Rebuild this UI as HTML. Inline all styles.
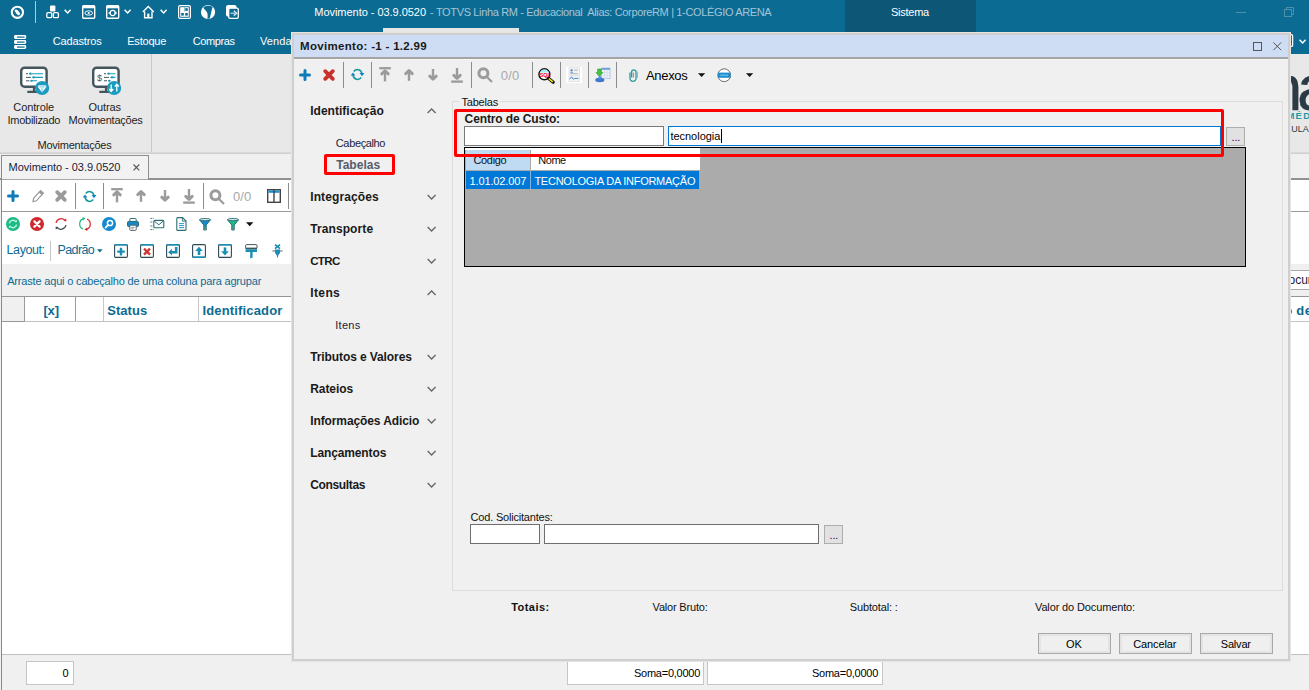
<!DOCTYPE html>
<html lang="pt-BR">
<head>
<meta charset="utf-8">
<title>Movimento - 03.9.0520 - TOTVS Linha RM</title>
<style>
*{box-sizing:border-box;margin:0;padding:0}
html,body{width:1309px;height:690px;overflow:hidden;background:#f0f0f0}
body{position:relative;font-family:"Liberation Sans",sans-serif;font-size:11px;color:#000;line-height:1}
.a{position:absolute}
.t{position:absolute;white-space:pre}
svg{position:absolute;overflow:visible}
#top{left:0;top:0;width:1309px;height:54px;background:#0c6b93}
#rib{left:0;top:54px;width:1309px;height:99px;background:#e8e8e8}
#main{left:0;top:153px;width:1309px;height:537px;background:#f0f0f0}
#dlg{left:291px;top:32px;width:1000px;height:629px;background:#f0f0f0}
.btn{position:absolute;border:1px solid #adadad;background:#e1e1e1}
.btn2{position:absolute;border:1px solid #a8a8a8;background:#efefef;box-shadow:inset 0 0 0 2px #e4e4e4}
.inp{position:absolute;background:#fff;border:1px solid #7a7a7a}
.sep{position:absolute;width:1px;background:#a0a0a0}
</style>
</head>
<body>
<div id="top" class="a">
<div class="a" style="left:845px;top:0;width:131px;height:33px;background:#0d5675"></div>
<div class="a" style="left:383px;top:28px;width:136px;height:5px;background:#e6e6e6"></div>
<svg style="left:10px;top:5px" width="15" height="15" viewBox="0 0 15 15"><circle cx="7.4" cy="7.3" r="5.6" fill="none" stroke="#fff" stroke-width="2.1"/><path d="M4.4 5.6 L5.8 4.2 L8 5.4 L10.4 8.8 L9 10.4 L6.8 9.2 Z" fill="#fff"/></svg>
<div class="a" style="left:35px;top:1px;width:1px;height:22px;background:#c9c3bb"></div>
<svg style="left:46px;top:5px" width="14" height="14" viewBox="0 0 14 14"><rect x="4" y="0.5" width="5.4" height="6" rx="1" fill="#fff"/><rect x="0.8" y="7.6" width="5" height="5" rx="1.2" fill="none" stroke="#fff" stroke-width="1.3"/><rect x="7.4" y="7.6" width="5" height="5" rx="1.2" fill="none" stroke="#fff" stroke-width="1.3"/></svg>
<svg style="left:82px;top:5px" width="14" height="14" viewBox="0 0 14 14"><rect x="0.7" y="0.7" width="12" height="12.6" rx="1" fill="none" stroke="#fff" stroke-width="1.4"/><rect x="0.7" y="0.7" width="12" height="2.6" fill="#fff"/><ellipse cx="6.7" cy="8" rx="3.8" ry="2.2" fill="none" stroke="#fff" stroke-width="1"/><circle cx="6.7" cy="8" r="1.1" fill="#fff"/></svg>
<svg style="left:106px;top:5px" width="14" height="14" viewBox="0 0 14 14"><rect x="0.7" y="0.7" width="12" height="12.6" rx="1" fill="none" stroke="#fff" stroke-width="1.4"/><rect x="0.7" y="0.7" width="12" height="2.6" fill="#fff"/><circle cx="6.7" cy="8" r="2.6" fill="none" stroke="#fff" stroke-width="1.1"/><path d="M2.6 8 h2.4 M8.4 8 h2.4" stroke="#fff" stroke-width="1.6"/></svg>
<svg style="left:142px;top:5px" width="14" height="14" viewBox="0 0 14 14"><path d="M0.8 7 L6.3 1.5 L11.8 7" fill="none" stroke="#fff" stroke-width="1.4"/><path d="M2.6 6.4 V12.8 H10 V6.4" fill="none" stroke="#fff" stroke-width="1.4"/><rect x="5.2" y="8.6" width="2.2" height="4" fill="#fff"/></svg>
<svg style="left:178px;top:5px" width="14" height="14" viewBox="0 0 14 14"><rect x="0.6" y="0.6" width="11.8" height="12.8" rx="1.4" fill="none" stroke="#fff" stroke-width="1.2"/><rect x="2.2" y="2.2" width="8.6" height="9.6" fill="#fff"/><rect x="7.2" y="3.2" width="2.6" height="2.6" fill="#0c6b93"/><rect x="3.2" y="8" width="2.6" height="2.6" fill="#0c6b93"/><rect x="7.2" y="8" width="2.6" height="2.6" fill="#0c6b93"/><rect x="6" y="2.2" width="0.8" height="4.4" fill="#7fb2c8"/></svg>
<svg style="left:200px;top:4px" width="16" height="16" viewBox="0 0 16 16"><circle cx="8.05" cy="8" r="7.1" fill="#fff"/><path d="M3.2 3.8 C4.4 2.4 6.4 1.8 8.2 1.8 C10 1.8 11.6 2.2 12.6 3 C12 5 11.4 7.6 10.8 10.2 C10.4 12 10 13.6 9.6 14.6 L7.4 14.8 C7.8 12 7.8 9.6 6.8 8 C5.8 6.4 4.2 5.6 3.2 3.6 Z" fill="#0c6b93"/></svg>
<svg style="left:226px;top:5px" width="14" height="14" viewBox="0 0 14 14"><rect x="0" y="0" width="10.6" height="11.6" rx="2.2" fill="#fff"/><rect x="2.7" y="3.2" width="9.6" height="10.2" rx="1.4" fill="#0c6b93" stroke="#fff" stroke-width="1.3"/><path d="M4.6 8.3 H9.6" stroke="#9fc8da" stroke-width="1.5"/><path d="M7.8 5.8 L10.6 8.3 L7.8 10.8" fill="none" stroke="#d4e7f0" stroke-width="1.4"/></svg>
<svg style="left:64px;top:9px" width="8" height="6" viewBox="0 0 8 6"><path d="M0.6 0.8 L3.6 3.9 L6.6 0.8" fill="none" stroke="#fff" stroke-width="1.5"/></svg>
<svg style="left:124px;top:9px" width="8" height="6" viewBox="0 0 8 6"><path d="M0.6 0.8 L3.6 3.9 L6.6 0.8" fill="none" stroke="#fff" stroke-width="1.5"/></svg>
<svg style="left:159.5px;top:9px" width="8" height="6" viewBox="0 0 8 6"><path d="M0.6 0.8 L3.6 3.9 L6.6 0.8" fill="none" stroke="#fff" stroke-width="1.5"/></svg>
<div class="t" style="left:314.3px;top:5.0px;font-size:11px;line-height:14px;height:14px;color:#fff;letter-spacing:-0.039px;">Movimento - 03.9.0520</div>
<div class="t" style="left:427.4px;top:5.0px;font-size:11px;line-height:14px;height:14px;color:#a3c6d8;letter-spacing:-0.350px;"> - TOTVS Linha RM - Educacional  Alias: CorporeRM | 1-COLÉGIO ARENA</div>
<div class="t" style="left:891px;top:5.0px;font-size:11px;line-height:14px;height:14px;color:#fff;letter-spacing:-0.250px;">Sistema</div>
<div class="a" style="left:1236px;top:12px;width:10px;height:1px;background:#4f90ad"></div>
<svg style="left:1284px;top:7px" width="11" height="11" viewBox="0 0 11 11"><rect x="0.5" y="2.5" width="7" height="7" fill="none" stroke="#4f90ad"/><path d="M2.5 2.5 V0.5 H9.5 V7.5 H7.5" fill="none" stroke="#4f90ad"/></svg>
<svg style="left:14px;top:35px" width="13" height="14" viewBox="0 0 13 14"><g fill="#fff"><rect x="0" y="0" width="12.2" height="4" rx="1.4"/><rect x="0" y="5" width="12.2" height="4" rx="1.4"/><rect x="0" y="10" width="12.2" height="4" rx="1.4"/></g><g fill="#0c6b93"><rect x="3" y="1.5" width="7.6" height="1.2"/><rect x="3" y="6.5" width="7.6" height="1.2"/><rect x="3" y="11.5" width="7.6" height="1.2"/></g></svg>
<div class="t" style="left:52.7px;top:34.0px;font-size:11px;line-height:14px;height:14px;color:#fff;letter-spacing:-0.149px;">Cadastros</div>
<div class="t" style="left:127.2px;top:34.0px;font-size:11px;line-height:14px;height:14px;color:#fff;letter-spacing:-0.196px;">Estoque</div>
<div class="t" style="left:192.8px;top:34.0px;font-size:11px;line-height:14px;height:14px;color:#fff;letter-spacing:-0.404px;">Compras</div>
<div class="t" style="left:260px;top:34.0px;font-size:11px;line-height:14px;height:14px;color:#fff;letter-spacing:0.116px;">Vendas</div>
<svg style="left:1289px;top:34px" width="6" height="14" viewBox="0 0 6 14"><path d="M0 0.6 H2.4 Q3.6 0.6 3.6 1.8 V11.2 Q3.6 12.4 2.4 12.4 H0" fill="none" stroke="#fff" stroke-width="1.3"/></svg>
<svg style="left:1298.5px;top:39px" width="8" height="6" viewBox="0 0 8 6"><path d="M0.6 0.8 L3.6 3.9 L6.6 0.8" fill="none" stroke="#fff" stroke-width="1.5"/></svg>
</div>
<div id="rib" class="a">
<div class="a" style="left:151px;top:0;width:1px;height:99px;background:#c8c8c8"></div>
<div class="a" style="left:0;top:98px;width:1309px;height:1px;background:#dadada"></div>
<svg style="left:20px;top:12px" width="30" height="30" viewBox="0 0 30 30"><rect x="1.2" y="1.7" width="25.4" height="19" rx="3.4" fill="#fff" stroke="#44555c" stroke-width="2.4"/><path d="M14 21.6 V25.6 M8.2 25.9 H19" stroke="#44555c" stroke-width="2.2" stroke-linecap="round" fill="none"/><path d="M6 7.7 H8 M6 11.4 H11 M6 14.8 H9.4" stroke="#44555c" stroke-width="1"/><path d="M9 7.7 H23 M12.4 11.4 H23 M10.4 14.8 H17" stroke="#1a9bc0" stroke-width="1.1"/><circle cx="10.4" cy="7.7" r="1.1" fill="#1a9bc0"/><circle cx="13.6" cy="11.4" r="1.1" fill="#1a9bc0"/><circle cx="11.6" cy="14.8" r="1.1" fill="#1a9bc0"/><circle cx="22.1" cy="22" r="7.1" fill="#1a9bc0"/><path d="M18.8 19.2 H25.4 L26.6 20.7 L22.1 26.6 L17.6 20.7 Z" fill="#fff"/><path d="M17.8 20.9 H26.4 M20.8 19.4 L22.1 26 L23.4 19.4" stroke="#1a9bc0" stroke-width="0.5" fill="none" opacity="0.7"/></svg>
<svg style="left:92px;top:12px" width="30" height="30" viewBox="0 0 30 30"><rect x="1.2" y="1.7" width="25.4" height="19" rx="3.4" fill="#fff" stroke="#44555c" stroke-width="2.4"/><path d="M14 21.6 V25.6 M8.2 25.9 H19" stroke="#44555c" stroke-width="2.2" stroke-linecap="round" fill="none"/><text x="5" y="15" font-family="Liberation Sans,sans-serif" font-size="9" fill="#44555c">$</text><path d="M12 7.7 H14 M12 11.4 H17 M12 14.8 H15" stroke="#44555c" stroke-width="1"/><path d="M15.4 7.7 H23.4 M18.4 11.4 H23.4 M16 14.8 H18.4" stroke="#1a9bc0" stroke-width="1.1"/><circle cx="16.6" cy="7.7" r="1.1" fill="#1a9bc0"/><circle cx="20" cy="11.4" r="1.1" fill="#1a9bc0"/><circle cx="17.4" cy="14.8" r="1.1" fill="#1a9bc0"/><circle cx="22.1" cy="22" r="7.1" fill="#1a9bc0"/><path d="M19.2 18.4 V25.2 M17.2 23 L19.2 25.4 L21.2 23 M24.8 25.4 V18.4 M22.8 20.6 L24.8 18.2 L26.8 20.6" stroke="#fff" stroke-width="1.3" fill="none"/></svg>
<div class="t" style="left:13.3px;top:46.0px;font-size:11px;line-height:14px;height:14px;color:#1e1e1e;letter-spacing:-0.110px;">Controle</div>
<div class="t" style="left:7.6px;top:59.4px;font-size:11px;line-height:14px;height:14px;color:#1e1e1e;letter-spacing:-0.286px;">Imobilizado</div>
<div class="t" style="left:88.6px;top:46.0px;font-size:11px;line-height:14px;height:14px;color:#1e1e1e;letter-spacing:-0.103px;">Outras</div>
<div class="t" style="left:68.6px;top:59.4px;font-size:11px;line-height:14px;height:14px;color:#1e1e1e;letter-spacing:-0.234px;">Movimentações</div>
<div class="t" style="left:37.5px;top:84.0px;font-size:11px;line-height:14px;height:14px;color:#1e1e1e;letter-spacing:-0.234px;">Movimentações</div>
<div class="a" style="left:1291px;top:10px;width:18px;height:60px;overflow:hidden"><div class="t" style="left:-24.2px;top:-8px;font-size:64px;line-height:64px;height:64px;font-weight:400;color:#2b3b45;letter-spacing:-5.5px;-webkit-text-stroke:0.25px #2b3b45">na</div></div>
<div class="t" style="left:1286.4px;top:55.8px;font-size:9.5px;line-height:12.5px;height:12.5px;font-weight:700;color:#1a9ba3;letter-spacing:1.3px;">MÉD</div>
<div class="t" style="left:1291.2px;top:69.4px;font-size:9px;line-height:12px;height:12px;color:#2b3b45;">ULAR</div>
</div>
<div id="main" class="a"></div>
<div class="a" style="left:0;top:153px;width:1309px;height:1px;background:#cfcfcf"></div>
<div class="a" style="left:0;top:178px;width:1309px;height:2px;background:#919191"></div>
<div class="a" style="left:1px;top:155px;width:148px;height:25px;background:#f2f2f2;border:1px solid #8f8f8f;border-bottom:0"></div>
<div class="a" style="left:2px;top:179px;width:146px;height:1px;background:#a6a6a6"></div>
<div class="t" style="left:8.6px;top:160.0px;font-size:11px;line-height:14px;height:14px;color:#1c1c38;letter-spacing:-0.034px;">Movimento - 03.9.0520</div>
<svg style="left:133px;top:164px" width="7" height="7" viewBox="0 0 7 7"><path d="M0.5 0.5 L6.3 6.3 M6.3 0.5 L0.5 6.3" stroke="#555" stroke-width="1.1"/></svg>
<div class="a" style="left:2px;top:180px;width:1307px;height:474px;background:#fff"></div>
<div class="a" style="left:1px;top:156px;width:1px;height:534px;background:#8a8a8a"></div>
<div class="a" style="left:2px;top:211px;width:1307px;height:1px;background:#9a9a9a"></div>
<div class="a" style="left:2px;top:264px;width:1307px;height:33px;background:#f0f0f0"></div>
<div class="a" style="left:2px;top:296px;width:1307px;height:1px;background:#959595"></div>
<div class="a" style="left:2px;top:321px;width:1307px;height:1px;background:#c2c2c2"></div>
<div class="a" style="left:2px;top:297px;width:22px;height:24px;background:#f0f0f0"></div>
<div class="a" style="left:24px;top:297px;width:1px;height:24px;background:#9a9a9a"></div>
<div class="a" style="left:75px;top:297px;width:1px;height:24px;background:#9a9a9a"></div>
<div class="a" style="left:103px;top:297px;width:1px;height:24px;background:#c6c6c6"></div>
<div class="a" style="left:198px;top:297px;width:1px;height:24px;background:#c6c6c6"></div>
<div class="a" style="left:2px;top:321px;width:23px;height:1px;background:#999"></div>
<div class="a" style="left:2px;top:654px;width:1307px;height:1px;background:#c0c0c0"></div>
<svg style="left:7.2px;top:190.2px" width="12" height="12" viewBox="0 0 12 12"><path d="M6 1.5 V10.5 M1.5 6 H10.5" stroke="#0c7bb6" stroke-width="3" stroke-linecap="round"/></svg>
<svg style="left:32px;top:189px" width="13" height="14" viewBox="0 0 13 14"><path d="M1 12.6 L1.6 9.4 L8.6 1.6 L11.4 4 L4.4 11.8 Z" fill="none" stroke="#9b9b9b" stroke-width="1.2"/><path d="M8.6 1.6 L11.4 4 L9.6 6 L6.8 3.6 Z" fill="#9b9b9b"/></svg>
<svg style="left:55px;top:190.2px" width="12" height="12" viewBox="0 0 12 12"><path d="M2.2 2.2 L9.8 9.8 M9.8 2.2 L2.2 9.8" stroke="#9b9b9b" stroke-width="3.8" stroke-linecap="round"/></svg>
<div class="a" style="left:75px;top:183px;width:1px;height:26px;background:#8c8c8c"></div>
<svg style="left:81.7px;top:190px" width="15" height="13" viewBox="0 0 15 13"><path d="M3.8 3.4 C6 0.6 11.2 0.8 12 5.8" fill="none" stroke="#16979d" stroke-width="1.6"/><path d="M11.2 9.6 C9 12.4 3.8 12.2 3 7.2" fill="none" stroke="#16979d" stroke-width="1.6"/><path d="M9.6 5 L14.4 5 L12 8.2 Z" fill="#0b86c6"/><path d="M0.6 7.6 L5.4 7.6 L3 4.4 Z" fill="#0b86c6"/></svg>
<div class="a" style="left:103px;top:183px;width:1px;height:26px;background:#8c8c8c"></div>
<svg style="left:111px;top:188px" width="12" height="15" viewBox="0 0 12 15"><path d="M0.2 1.2 H11.8" stroke="#9b9b9b" stroke-width="2.3"/><path d="M6 14.4 V5" stroke="#9b9b9b" stroke-width="2.4"/><path d="M2.8 6.9 L6 3.9 L9.2 6.9" fill="none" stroke="#9b9b9b" stroke-width="3" stroke-linecap="round" stroke-linejoin="round"/></svg>
<svg style="left:136.4px;top:190px" width="10" height="12" viewBox="0 0 10 12"><path d="M5 11.8 V2" stroke="#9b9b9b" stroke-width="2.4"/><path d="M1.8 4.6 L5 1.6 L8.2 4.6" fill="none" stroke="#9b9b9b" stroke-width="3" stroke-linecap="round" stroke-linejoin="round"/></svg>
<svg style="left:159.6px;top:190.4px" width="10" height="12" viewBox="0 0 10 12"><path d="M5 0 V9.8" stroke="#9b9b9b" stroke-width="2.4"/><path d="M1.8 7.2 L5 10.2 L8.2 7.2" fill="none" stroke="#9b9b9b" stroke-width="3" stroke-linecap="round" stroke-linejoin="round"/></svg>
<svg style="left:183px;top:188.8px" width="12" height="15" viewBox="0 0 12 15"><path d="M0.2 13.6 H11.8" stroke="#9b9b9b" stroke-width="2.3"/><path d="M6 0 V9.4" stroke="#9b9b9b" stroke-width="2.4"/><path d="M2.8 7.3 L6 10.3 L9.2 7.3" fill="none" stroke="#9b9b9b" stroke-width="3" stroke-linecap="round" stroke-linejoin="round"/></svg>
<div class="a" style="left:203px;top:183px;width:1px;height:26px;background:#8c8c8c"></div>
<svg style="left:209px;top:188.5px" width="16" height="16" viewBox="0 0 16 16"><circle cx="6.4" cy="6.2" r="4.5" fill="none" stroke="#9b9b9b" stroke-width="3"/><path d="M10 10 L15 15" stroke="#9b9b9b" stroke-width="2.2"/></svg>
<div class="t" style="left:233px;top:189.0px;font-size:13px;line-height:16px;height:16px;color:#a8a8a8;letter-spacing:0.141px;">0/0</div>
<svg style="left:267px;top:189px" width="14" height="14" viewBox="0 0 14 14"><rect x="0.7" y="0.7" width="12.6" height="12.6" fill="#fff" stroke="#444" stroke-width="1.4"/><rect x="1.4" y="1.4" width="11.2" height="2.4" fill="#1b8fd0"/><path d="M7 1 V13" stroke="#444" stroke-width="1.4"/></svg>
<div class="a" style="left:288px;top:183px;width:1px;height:26px;background:#8c8c8c"></div>
<svg style="left:6px;top:217px" width="14" height="14" viewBox="0 0 14 14"><circle cx="7" cy="7" r="7" fill="#1dbb84"/><path d="M3.4 6.4 A3.7 3.7 0 0 1 10 4.8 M10.6 7.6 A3.7 3.7 0 0 1 4 9.2" fill="none" stroke="#c9f3e2" stroke-width="1.4"/><path d="M8.6 5.2 L11 5 L10.8 2.8 Z M5.4 8.8 L3 9 L3.2 11.2 Z" fill="#c9f3e2"/></svg>
<svg style="left:30px;top:217px" width="14" height="14" viewBox="0 0 14 14"><circle cx="7" cy="7" r="7" fill="#d0282d"/><path d="M4.4 4.4 L9.6 9.6 M9.6 4.4 L4.4 9.6" stroke="#fff" stroke-width="2.2" stroke-linecap="round"/></svg>
<svg style="left:54px;top:217px" width="14" height="14" viewBox="0 0 14 14"><path d="M2 6 A5.2 5.2 0 0 1 11.4 4" fill="none" stroke="#d0282d" stroke-width="1.2"/><path d="M12 8 A5.2 5.2 0 0 1 2.6 10" fill="none" stroke="#3c4a4f" stroke-width="1.2"/><path d="M9.4 3.6 L12.4 4.6 L12.2 1.6 Z" fill="#d0282d"/><path d="M4.6 10.4 L1.6 9.4 L1.8 12.4 Z" fill="#3c4a4f"/></svg>
<svg style="left:78px;top:217px" width="14" height="14" viewBox="0 0 14 14"><path d="M5.4 1.6 A5.6 5.6 0 0 0 5 12" fill="none" stroke="#1dbb84" stroke-width="1.2"/><path d="M8.6 12.4 A5.6 5.6 0 0 0 9 2" fill="none" stroke="#d0282d" stroke-width="1.2"/><path d="M4.6 0 L7.6 1.6 L4.8 3.4 Z" fill="#1dbb84"/><path d="M9.4 14 L6.4 12.4 L9.2 10.6 Z" fill="#d0282d"/></svg>
<svg style="left:102px;top:217px" width="14" height="14" viewBox="0 0 14 14"><circle cx="7" cy="7" r="7" fill="#1389d1"/><circle cx="8" cy="6" r="2.6" fill="none" stroke="#fff" stroke-width="1.5"/><path d="M6.2 7.8 L3.6 10.6" stroke="#fff" stroke-width="1.8" stroke-linecap="round"/></svg>
<svg style="left:127px;top:218px" width="13" height="13" viewBox="0 0 13 13"><rect x="2.8" y="0.5" width="6.4" height="3.4" rx="0.8" fill="#fff" stroke="#2c6f73" stroke-width="1"/><rect x="0.5" y="3.4" width="11" height="5.2" rx="1.2" fill="#1785c6" stroke="#2c6f73" stroke-width="1"/><rect x="2.8" y="7.2" width="6.4" height="5.2" rx="0.8" fill="#fff" stroke="#55666c" stroke-width="1"/><path d="M4.4 9.4 H7.6 M4.4 10.8 H6.4" stroke="#55666c" stroke-width="0.7"/></svg>
<svg style="left:150px;top:217px" width="15" height="14" viewBox="0 0 15 14"><path d="M0.4 1.4 H4 M0.4 5 H2.6 M0.4 9 H2.6 M0.4 12.6 H4" stroke="#2c6f73" stroke-width="0.9" stroke-dasharray="2 1"/><rect x="3.8" y="3.4" width="10" height="7.4" rx="1" fill="#fff" stroke="#2c6f73" stroke-width="1.1"/><path d="M4.2 4 L8.8 7.8 L13.4 4" fill="none" stroke="#2c6f73" stroke-width="1"/></svg>
<svg style="left:176px;top:217px" width="11" height="14" viewBox="0 0 11 14"><path d="M0.8 1.6 Q0.8 0.6 1.8 0.6 H6.6 L10 4 V12.4 Q10 13.4 9 13.4 H1.8 Q0.8 13.4 0.8 12.4 Z" fill="#fff" stroke="#2c6f73" stroke-width="1.1"/><path d="M6.4 0.8 V4.2 H9.8" fill="none" stroke="#2c6f73" stroke-width="0.9"/><path d="M3 6.6 H8 M3 8.6 H8 M3 10.6 H8" stroke="#1389d1" stroke-width="0.9"/></svg>
<svg style="left:199px;top:218px" width="12" height="13" viewBox="0 0 12 13"><path d="M0.5 1.8 H11.5 L7.2 7 V12 H4.8 V7 Z" fill="#1389d1" stroke="#2c6f73" stroke-width="1"/><path d="M4.8 9 H7.2 V12 H4.8 Z" fill="#4f8f86"/><ellipse cx="6" cy="1.6" rx="5.4" ry="1.1" fill="#dfeef2" stroke="#2c6f73" stroke-width="0.9"/></svg>
<svg style="left:227px;top:218px" width="12" height="13" viewBox="0 0 12 13"><path d="M0.5 1.8 H11.5 L7.2 7 V12 H4.8 V7 Z" fill="#1dbb84" stroke="#2c6f73" stroke-width="1"/><path d="M4.8 9 H7.2 V12 H4.8 Z" fill="#4f8f86"/><ellipse cx="6" cy="1.6" rx="5.4" ry="1.1" fill="#dfeef2" stroke="#2c6f73" stroke-width="0.9"/></svg>
<svg style="left:246px;top:222px" width="8" height="5" viewBox="0 0 8 5"><path d="M0 0.3 H7.4 L3.7 4.2 Z" fill="#111"/></svg>
<div class="t" style="left:6.6px;top:243.4px;font-size:12.5px;line-height:15.5px;height:15.5px;color:#0c6b93;letter-spacing:-0.431px;">Layout:</div>
<div class="a" style="left:50px;top:241px;width:1px;height:20px;background:#c4c4c4"></div>
<div class="t" style="left:57.6px;top:243.4px;font-size:12.5px;line-height:15.5px;height:15.5px;color:#0c6b93;letter-spacing:-0.652px;">Padrão</div>
<svg style="left:97px;top:249px" width="6" height="4" viewBox="0 0 6 4"><path d="M0 0.2 H5.6 L2.8 3.4 Z" fill="#0c6b93"/></svg>
<svg style="left:114px;top:244px" width="14" height="14" viewBox="0 0 14 14"><rect x="0.6" y="0.6" width="12.8" height="12.8" rx="1.2" fill="#fff" stroke="#2f4a52" stroke-width="1.1"/><rect x="0.6" y="0" width="12.8" height="1.6" fill="#1a8fb4"/><path d="M7 3.8 V11.4 M3.2 7.6 H10.8" stroke="#1a8fb4" stroke-width="2.4"/></svg>
<svg style="left:140px;top:244px" width="14" height="14" viewBox="0 0 14 14"><rect x="0.6" y="0.6" width="12.8" height="12.8" rx="1.2" fill="#fff" stroke="#2f4a52" stroke-width="1.1"/><rect x="0.6" y="0" width="12.8" height="1.6" fill="#1a8fb4"/><path d="M4 4.6 L10 10.6 M10 4.6 L4 10.6" stroke="#cf3a35" stroke-width="2.4"/></svg>
<svg style="left:166px;top:244px" width="14" height="14" viewBox="0 0 14 14"><rect x="0.6" y="0.6" width="12.8" height="12.8" rx="1.2" fill="#fff" stroke="#2f4a52" stroke-width="1.1"/><rect x="0.6" y="0" width="12.8" height="1.6" fill="#1a8fb4"/><path d="M10.2 3 V8.2 H5" fill="none" stroke="#1a8fb4" stroke-width="2.6"/><path d="M6 4.8 L2.2 8.2 L6 11.6 Z" fill="#1a8fb4"/></svg>
<svg style="left:192px;top:244px" width="14" height="14" viewBox="0 0 14 14"><rect x="0.6" y="0.6" width="12.8" height="12.8" rx="1.2" fill="#fff" stroke="#2f4a52" stroke-width="1.1"/><rect x="0.6" y="12.4" width="12.8" height="1.6" fill="#1a8fb4"/><path d="M7 11 V5.4" stroke="#1a8fb4" stroke-width="2.6"/><path d="M3.2 7 L7 2.8 L10.8 7 Z" fill="#1a8fb4"/></svg>
<svg style="left:218px;top:244px" width="14" height="14" viewBox="0 0 14 14"><rect x="0.6" y="0.6" width="12.8" height="12.8" rx="1.2" fill="#fff" stroke="#2f4a52" stroke-width="1.1"/><rect x="0.6" y="0" width="12.8" height="1.6" fill="#1a8fb4"/><path d="M7 3.4 V8.6" stroke="#1a8fb4" stroke-width="2.6"/><path d="M3.2 7.2 L7 11.4 L10.8 7.2 Z" fill="#1a8fb4"/></svg>
<svg style="left:245px;top:244px" width="13" height="15" viewBox="0 0 13 15"><rect x="0.6" y="0.6" width="11.4" height="4" rx="1" fill="#fff" stroke="#46565e" stroke-width="1"/><rect x="0.6" y="3.6" width="11.4" height="1.6" fill="#46565e"/><path d="M0.6 5.2 H12 V8 H7.6 V13.6 L5.2 14.4 V8 H0.6 Z" fill="#1a8fb4"/></svg>
<svg style="left:272px;top:244px" width="11" height="15" viewBox="0 0 11 15"><path d="M3 0.6 L8 4.6 M8 0.6 L3 4.6" stroke="#1a8fb4" stroke-width="1.8"/><path d="M0.4 7 H10.6" stroke="#46565e" stroke-width="0.9"/><path d="M3 5.6 H8 V9 L6.4 11 L5.6 14.4 L4.6 11 L3 9 Z" fill="#1a8fb4"/></svg>
<div class="t" style="left:7.2px;top:274.0px;font-size:11px;line-height:14px;height:14px;color:#0c6b93;letter-spacing:-0.176px;">Arraste aqui o cabeçalho de uma coluna para agrupar</div>
<div class="t" style="left:43.4px;top:302.5px;font-size:13px;line-height:16px;height:16px;font-weight:700;color:#0c6b93;letter-spacing:-0.130px;">[x]</div>
<div class="t" style="left:107.2px;top:302.5px;font-size:13px;line-height:16px;height:16px;font-weight:700;color:#0c6b93;letter-spacing:0.044px;">Status</div>
<div class="t" style="left:202.5px;top:302.5px;font-size:13px;line-height:16px;height:16px;font-weight:700;color:#0c6b93;letter-spacing:0.153px;">Identificador</div>
<div class="inp" style="left:1286px;top:270px;width:30px;height:20px;border-color:#ababab"></div>
<div class="t" style="left:1279.8px;top:272.9px;font-size:12px;line-height:15px;height:15px;color:#1c1c38;">Docum</div>
<div class="t" style="left:1284.2px;top:302.5px;font-size:13px;line-height:16px;height:16px;font-weight:700;color:#0c6b93;letter-spacing:0.316px;">o de</div>
<div class="inp" style="left:26px;top:661px;width:48px;height:24px;border-color:#c6c6c6"></div>
<div class="t" style="left:62.5px;top:666.0px;font-size:11px;line-height:14px;height:14px;letter-spacing:-0.125px;">0</div>
<div class="inp" style="left:567px;top:661px;width:137px;height:24px;border-color:#c6c6c6"></div>
<div class="inp" style="left:707px;top:661px;width:176px;height:24px;border-color:#c6c6c6"></div>
<div class="t" style="left:634px;top:666.0px;font-size:11px;line-height:14px;height:14px;letter-spacing:-0.256px;">Soma=0,0000</div>
<div class="t" style="left:812px;top:666.0px;font-size:11px;line-height:14px;height:14px;letter-spacing:-0.256px;">Soma=0,0000</div>
<div class="a" style="left:291px;top:32px;width:1000px;height:630px;background:#e6e4e1"></div>
<div class="a" style="left:292px;top:33px;width:998px;height:628px;background:#cfcfcf"></div>
<div class="a" style="left:294px;top:35px;width:994px;height:624px;background:#f0f0f0"></div>
<div class="a" style="left:294px;top:35px;width:994px;height:22px;background:#cfddf4"></div>
<div class="a" style="left:294px;top:57px;width:994px;height:2px;background:#a4a4a4"></div>
<div class="a" style="left:294px;top:59px;width:994px;height:1px;background:#f8f8f8"></div>
<div class="t" style="left:300px;top:38.8px;font-size:11.5px;line-height:14.5px;height:14.5px;font-weight:700;color:#1a1a1a;letter-spacing:0.312px;">Movimento: -1 - 1.2.99</div>
<svg style="left:1253px;top:42px" width="9" height="9" viewBox="0 0 9 9"><rect x="0.5" y="0.5" width="8" height="8" fill="none" stroke="#555" stroke-width="1"/></svg>
<svg style="left:1273px;top:42px" width="9" height="9" viewBox="0 0 9 9"><path d="M0.4 0.4 L8.2 8.2 M8.2 0.4 L0.4 8.2" stroke="#555" stroke-width="1"/></svg>
<svg style="left:299px;top:69.2px" width="12" height="12" viewBox="0 0 12 12"><path d="M6 1.5 V10.5 M1.5 6 H10.5" stroke="#0c7bb6" stroke-width="3" stroke-linecap="round"/></svg>
<svg style="left:322.6px;top:69.2px" width="12" height="12" viewBox="0 0 12 12"><path d="M2.2 2.2 L9.8 9.8 M9.8 2.2 L2.2 9.8" stroke="#c8312c" stroke-width="3.8" stroke-linecap="round"/></svg>
<div class="a" style="left:343px;top:62px;width:1px;height:26px;background:#8c8c8c"></div>
<div class="a" style="left:371px;top:62px;width:1px;height:26px;background:#8c8c8c"></div>
<div class="a" style="left:471px;top:62px;width:1px;height:26px;background:#8c8c8c"></div>
<div class="a" style="left:532px;top:62px;width:1px;height:26px;background:#8c8c8c"></div>
<div class="a" style="left:560px;top:62px;width:1px;height:26px;background:#8c8c8c"></div>
<div class="a" style="left:588px;top:62px;width:1px;height:26px;background:#8c8c8c"></div>
<div class="a" style="left:616px;top:62px;width:1px;height:26px;background:#8c8c8c"></div>
<svg style="left:349.6px;top:68.3px" width="15" height="13" viewBox="0 0 15 13"><path d="M3.8 3.4 C6 0.6 11.2 0.8 12 5.8" fill="none" stroke="#16979d" stroke-width="1.6"/><path d="M11.2 9.6 C9 12.4 3.8 12.2 3 7.2" fill="none" stroke="#16979d" stroke-width="1.6"/><path d="M9.6 5 L14.4 5 L12 8.2 Z" fill="#0b86c6"/><path d="M0.6 7.6 L5.4 7.6 L3 4.4 Z" fill="#0b86c6"/></svg>
<svg style="left:379px;top:66.9px" width="12" height="15" viewBox="0 0 12 15"><path d="M0.2 1.2 H11.8" stroke="#9b9b9b" stroke-width="2.3"/><path d="M6 14.4 V5" stroke="#9b9b9b" stroke-width="2.4"/><path d="M2.8 6.9 L6 3.9 L9.2 6.9" fill="none" stroke="#9b9b9b" stroke-width="3" stroke-linecap="round" stroke-linejoin="round"/></svg>
<svg style="left:404.4px;top:68.9px" width="10" height="12" viewBox="0 0 10 12"><path d="M5 11.8 V2" stroke="#9b9b9b" stroke-width="2.4"/><path d="M1.8 4.6 L5 1.6 L8.2 4.6" fill="none" stroke="#9b9b9b" stroke-width="3" stroke-linecap="round" stroke-linejoin="round"/></svg>
<svg style="left:427.6px;top:69.4px" width="10" height="12" viewBox="0 0 10 12"><path d="M5 0 V9.8" stroke="#9b9b9b" stroke-width="2.4"/><path d="M1.8 7.2 L5 10.2 L8.2 7.2" fill="none" stroke="#9b9b9b" stroke-width="3" stroke-linecap="round" stroke-linejoin="round"/></svg>
<svg style="left:451px;top:67.8px" width="12" height="15" viewBox="0 0 12 15"><path d="M0.2 13.6 H11.8" stroke="#9b9b9b" stroke-width="2.3"/><path d="M6 0 V9.4" stroke="#9b9b9b" stroke-width="2.4"/><path d="M2.8 7.3 L6 10.3 L9.2 7.3" fill="none" stroke="#9b9b9b" stroke-width="3" stroke-linecap="round" stroke-linejoin="round"/></svg>
<svg style="left:477px;top:67px" width="16" height="16" viewBox="0 0 16 16"><circle cx="6.4" cy="6.2" r="4.5" fill="none" stroke="#9b9b9b" stroke-width="3"/><path d="M10 10 L15 15" stroke="#9b9b9b" stroke-width="2.2"/></svg>
<div class="t" style="left:500.8px;top:67.5px;font-size:13px;line-height:16px;height:16px;color:#a8a8a8;letter-spacing:0.174px;">0/0</div>
<svg style="left:538px;top:67.6px" width="17" height="16" viewBox="0 0 17 16"><circle cx="6.4" cy="6.3" r="5.5" fill="#fff" stroke="#111" stroke-width="1.4"/><path d="M1.9 4.6 A4.8 4.8 0 0 1 10.9 4.6 Z" fill="#9ff1f6"/><path d="M10.4 10.2 L15.2 14.2" stroke="#111" stroke-width="3.2" stroke-linecap="round"/><path d="M10.8 10.6 L14.8 13.9" stroke="#f4e800" stroke-width="1.5"/><text x="1.7" y="8.5" font-family="Liberation Sans,sans-serif" font-size="5.4" font-weight="700" fill="#f00000">SQL</text></svg>
<svg style="left:566px;top:67px" width="16" height="16" viewBox="0 0 16 16"><rect x="0" y="0" width="16" height="16" fill="#fff"/><rect x="3" y="0.8" width="10.6" height="13.8" fill="#f3f3f3" stroke="#d9d9d9" stroke-width="0.7"/><circle cx="5.6" cy="3.4" r="1.1" fill="#3a78d0"/><path d="M4.4 5.8 H7 " stroke="#5c8fd6" stroke-width="1"/><path d="M8 3.2 H11.8 M4.4 6.6 H11.8" stroke="#aab2bd" stroke-width="0.9"/><path d="M3.6 8.2 H13" stroke="#d0d0d0" stroke-width="0.7"/><path d="M3.6 12.2 L5.6 9.8 L7 12 Q8 12.6 8.6 11.4 H12.4" stroke="#3a78d0" stroke-width="0.9" fill="none"/></svg>
<svg style="left:595px;top:67px" width="16" height="16" viewBox="0 0 16 16"><rect x="6.6" y="1" width="8.4" height="10.6" fill="#eef2f8" stroke="#a9c4e6" stroke-width="0.8"/><rect x="6.6" y="1" width="8.4" height="1.8" fill="#6a9ede"/><path d="M9.4 2.8 V11.6 M12.2 2.8 V11.6 M6.6 5.6 H15 M6.6 8.4 H15" stroke="#cdd8e8" stroke-width="0.6"/><path d="M2.6 2 H6.2 V5.6 H7.8 L4.4 9.6 L1 5.6 H2.6 Z" fill="#46c046" stroke="#2c9a32" stroke-width="0.6"/><ellipse cx="4.8" cy="13" rx="4.6" ry="2.2" fill="#3f78cc"/><circle cx="5" cy="10.6" r="1.7" fill="#5b8fd8"/></svg>
<svg style="left:629px;top:68px" width="10" height="14" viewBox="0 0 10 14"><path d="M2.6 9.6 V4 A2.2 2.2 0 0 1 7 4 V10.4 A3 3 0 0 1 1 10.4 V4.6" fill="none" stroke="#2f9aa0" stroke-width="1.3"/><path d="M4.4 4.6 V9.6" stroke="#8a9a9a" stroke-width="1.2"/><path d="M8.4 3.6 V10" stroke="#8a9a9a" stroke-width="1" opacity="0.8"/></svg>
<div class="t" style="left:646px;top:67.5px;font-size:13px;line-height:16px;height:16px;color:#000;letter-spacing:-0.329px;">Anexos</div>
<svg style="left:698px;top:73px" width="8" height="5" viewBox="0 0 8 5"><path d="M0 0.3 H7.2 L3.6 4 Z" fill="#111"/></svg>
<svg style="left:717px;top:68px" width="15" height="15" viewBox="0 0 15 15"><circle cx="7.2" cy="7.2" r="6.4" fill="#fff" stroke="#5a5a5a" stroke-width="0.9"/><rect x="1" y="4.6" width="12.4" height="5.2" fill="#1f8fd0"/><path d="M3.4 7.2 H11" stroke="#bfe3f5" stroke-width="0.9" stroke-dasharray="1.4 0.6"/></svg>
<svg style="left:746px;top:73px" width="8" height="5" viewBox="0 0 8 5"><path d="M0 0.3 H7.2 L3.6 4 Z" fill="#111"/></svg>
<div class="t" style="left:310.2px;top:103.5px;font-size:12px;line-height:15px;height:15px;font-weight:700;color:#1a1a1a;letter-spacing:0.019px;">Identificação</div>
<svg style="left:427.4px;top:107.8px" width="10" height="6" viewBox="0 0 10 6"><path d="M0.6 5 L4.6 1 L8.6 5" fill="none" stroke="#666" stroke-width="1.3"/></svg>
<div class="t" style="left:310.2px;top:189.5px;font-size:12px;line-height:15px;height:15px;font-weight:700;color:#1a1a1a;letter-spacing:0.113px;">Integrações</div>
<svg style="left:427.4px;top:194.4px" width="10" height="6" viewBox="0 0 10 6"><path d="M0.6 1 L4.6 5 L8.6 1" fill="none" stroke="#666" stroke-width="1.3"/></svg>
<div class="t" style="left:310.2px;top:221.5px;font-size:12px;line-height:15px;height:15px;font-weight:700;color:#1a1a1a;letter-spacing:0.098px;">Transporte</div>
<svg style="left:427.4px;top:226.4px" width="10" height="6" viewBox="0 0 10 6"><path d="M0.6 1 L4.6 5 L8.6 1" fill="none" stroke="#666" stroke-width="1.3"/></svg>
<div class="t" style="left:310.2px;top:253.8px;font-size:11.5px;line-height:14.5px;height:14.5px;font-weight:700;color:#1a1a1a;letter-spacing:-0.638px;">CTRC</div>
<svg style="left:427.4px;top:258.4px" width="10" height="6" viewBox="0 0 10 6"><path d="M0.6 1 L4.6 5 L8.6 1" fill="none" stroke="#666" stroke-width="1.3"/></svg>
<div class="t" style="left:310.2px;top:285.5px;font-size:12px;line-height:15px;height:15px;font-weight:700;color:#1a1a1a;letter-spacing:0.397px;">Itens</div>
<svg style="left:427.4px;top:289.8px" width="10" height="6" viewBox="0 0 10 6"><path d="M0.6 5 L4.6 1 L8.6 5" fill="none" stroke="#666" stroke-width="1.3"/></svg>
<div class="t" style="left:310.2px;top:349.5px;font-size:12px;line-height:15px;height:15px;font-weight:700;color:#1a1a1a;letter-spacing:-0.099px;">Tributos e Valores</div>
<svg style="left:427.4px;top:354.4px" width="10" height="6" viewBox="0 0 10 6"><path d="M0.6 1 L4.6 5 L8.6 1" fill="none" stroke="#666" stroke-width="1.3"/></svg>
<div class="t" style="left:310.2px;top:381.5px;font-size:12px;line-height:15px;height:15px;font-weight:700;color:#1a1a1a;letter-spacing:-0.051px;">Rateios</div>
<svg style="left:427.4px;top:386.4px" width="10" height="6" viewBox="0 0 10 6"><path d="M0.6 1 L4.6 5 L8.6 1" fill="none" stroke="#666" stroke-width="1.3"/></svg>
<div class="t" style="left:310.2px;top:413.5px;font-size:12px;line-height:15px;height:15px;font-weight:700;color:#1a1a1a;letter-spacing:-0.107px;">Informações Adicio</div>
<svg style="left:427.4px;top:418.4px" width="10" height="6" viewBox="0 0 10 6"><path d="M0.6 1 L4.6 5 L8.6 1" fill="none" stroke="#666" stroke-width="1.3"/></svg>
<div class="t" style="left:310.2px;top:445.5px;font-size:12px;line-height:15px;height:15px;font-weight:700;color:#1a1a1a;letter-spacing:-0.124px;">Lançamentos</div>
<svg style="left:427.4px;top:450.4px" width="10" height="6" viewBox="0 0 10 6"><path d="M0.6 1 L4.6 5 L8.6 1" fill="none" stroke="#666" stroke-width="1.3"/></svg>
<div class="t" style="left:310.2px;top:477.5px;font-size:12px;line-height:15px;height:15px;font-weight:700;color:#1a1a1a;letter-spacing:-0.335px;">Consultas</div>
<svg style="left:427.4px;top:482.4px" width="10" height="6" viewBox="0 0 10 6"><path d="M0.6 1 L4.6 5 L8.6 1" fill="none" stroke="#666" stroke-width="1.3"/></svg>
<div class="t" style="left:335.8px;top:136.0px;font-size:11px;line-height:14px;height:14px;color:#1c1c38;letter-spacing:-0.366px;">Cabeçalho</div>
<div class="t" style="left:335.2px;top:318.0px;font-size:11px;line-height:14px;height:14px;color:#1c1c38;letter-spacing:0.308px;">Itens</div>
<div class="a" style="left:324px;top:154px;width:71px;height:21px;border:3px solid #ff0000;border-radius:2px"></div>
<div class="t" style="left:336.2px;top:157.5px;font-size:12px;line-height:15px;height:15px;font-weight:700;color:#565d69;letter-spacing:0.027px;">Tabelas</div>
<div class="a" style="left:452px;top:101px;width:831px;height:490px;border:1px solid #dcdcdc"></div>
<div class="a" style="left:459px;top:96px;width:41px;height:12px;background:#f0f0f0"></div>
<div class="t" style="left:461.4px;top:95.2px;font-size:11px;line-height:14px;height:14px;color:#111;letter-spacing:-0.189px;">Tabelas</div>
<div class="t" style="left:464.6px;top:111.9px;font-size:12px;line-height:15px;height:15px;font-weight:700;color:#1a1a1a;letter-spacing:-0.121px;">Centro de Custo:</div>
<div class="inp" style="left:464px;top:126px;width:200px;height:20px;border-color:#7a7a7a"></div>
<div class="inp" style="left:668px;top:126px;width:553px;height:20px;border-color:#0078d7"></div>
<div class="t" style="left:670.4px;top:129.0px;font-size:11px;line-height:14px;height:14px;color:#000;letter-spacing:-0.016px;">tecnologia</div>
<div class="a" style="left:721px;top:129px;width:1px;height:14px;background:#000"></div>
<div class="btn" style="left:1226px;top:127px;width:19px;height:19px"></div>
<div class="t" style="left:1231.6px;top:129.5px;font-size:11px;line-height:14px;height:14px;color:#300060;letter-spacing:-0.191px;">...</div>
<div class="a" style="left:464px;top:147px;width:782px;height:120px;background:#ababab;border:1px solid #000"></div>
<div class="a" style="left:465px;top:148px;width:235px;height:2px;background:#fff"></div>
<div class="a" style="left:466px;top:150px;width:64px;height:20px;background:#bfdbf3"></div>
<div class="a" style="left:531px;top:150px;width:169px;height:20px;background:#fff"></div>
<div class="t" style="left:473.4px;top:153.4px;font-size:11px;line-height:14px;height:14px;color:#111;letter-spacing:-0.310px;">Codigo</div>
<div class="t" style="left:538.2px;top:153.4px;font-size:11px;line-height:14px;height:14px;color:#111;letter-spacing:-0.436px;">Nome</div>
<div class="a" style="left:466px;top:171px;width:233px;height:18px;background:#0078d7"></div>
<div class="a" style="left:530px;top:171px;width:1px;height:18px;background:#7fb4e6"></div>
<div class="t" style="left:469.6px;top:173.6px;font-size:11px;line-height:14px;height:14px;color:#fff;letter-spacing:-0.139px;">1.01.02.007</div>
<div class="t" style="left:534.4px;top:173.6px;font-size:11px;line-height:14px;height:14px;color:#fff;letter-spacing:-0.252px;">TECNOLOGIA DA INFORMAÇÃO</div>
<div class="a" style="left:454px;top:109px;width:770px;height:48px;border:3px solid #ff0000;border-radius:2px"></div>
<div class="t" style="left:470.6px;top:510.0px;font-size:11px;line-height:14px;height:14px;color:#111;letter-spacing:-0.201px;">Cod. Solicitantes:</div>
<div class="inp" style="left:470px;top:524px;width:70px;height:20px;border-color:#6e6e6e"></div>
<div class="inp" style="left:544px;top:524px;width:275px;height:20px;border-color:#6e6e6e"></div>
<div class="btn" style="left:824px;top:525px;width:19px;height:19px"></div>
<div class="t" style="left:829.6px;top:527.5px;font-size:11px;line-height:14px;height:14px;color:#300060;letter-spacing:-0.191px;">...</div>
<div class="t" style="left:511.2px;top:599.6px;font-size:11px;line-height:14px;height:14px;font-weight:700;color:#111;letter-spacing:0.450px;">Totais:</div>
<div class="t" style="left:652.6px;top:600.4px;font-size:11px;line-height:14px;height:14px;color:#111;letter-spacing:-0.190px;">Valor Bruto:</div>
<div class="t" style="left:849.8px;top:600.4px;font-size:11px;line-height:14px;height:14px;color:#111;letter-spacing:-0.141px;">Subtotal: :</div>
<div class="t" style="left:1035px;top:600.4px;font-size:11px;line-height:14px;height:14px;color:#111;letter-spacing:-0.133px;">Valor do Documento:</div>
<div class="btn2" style="left:1038px;top:633px;width:73px;height:21px"></div>
<div class="t" style="left:1066.0px;top:636.6px;font-size:11px;line-height:14px;height:14px;color:#000;letter-spacing:-0.153px;">OK</div>
<div class="btn2" style="left:1119px;top:633px;width:73px;height:21px"></div>
<div class="t" style="left:1133.3px;top:636.6px;font-size:11px;line-height:14px;height:14px;color:#000;letter-spacing:-0.129px;">Cancelar</div>
<div class="btn2" style="left:1200px;top:633px;width:73px;height:21px"></div>
<div class="t" style="left:1220.8px;top:636.6px;font-size:11px;line-height:14px;height:14px;color:#000;letter-spacing:-0.198px;">Salvar</div>
</body>
</html>
